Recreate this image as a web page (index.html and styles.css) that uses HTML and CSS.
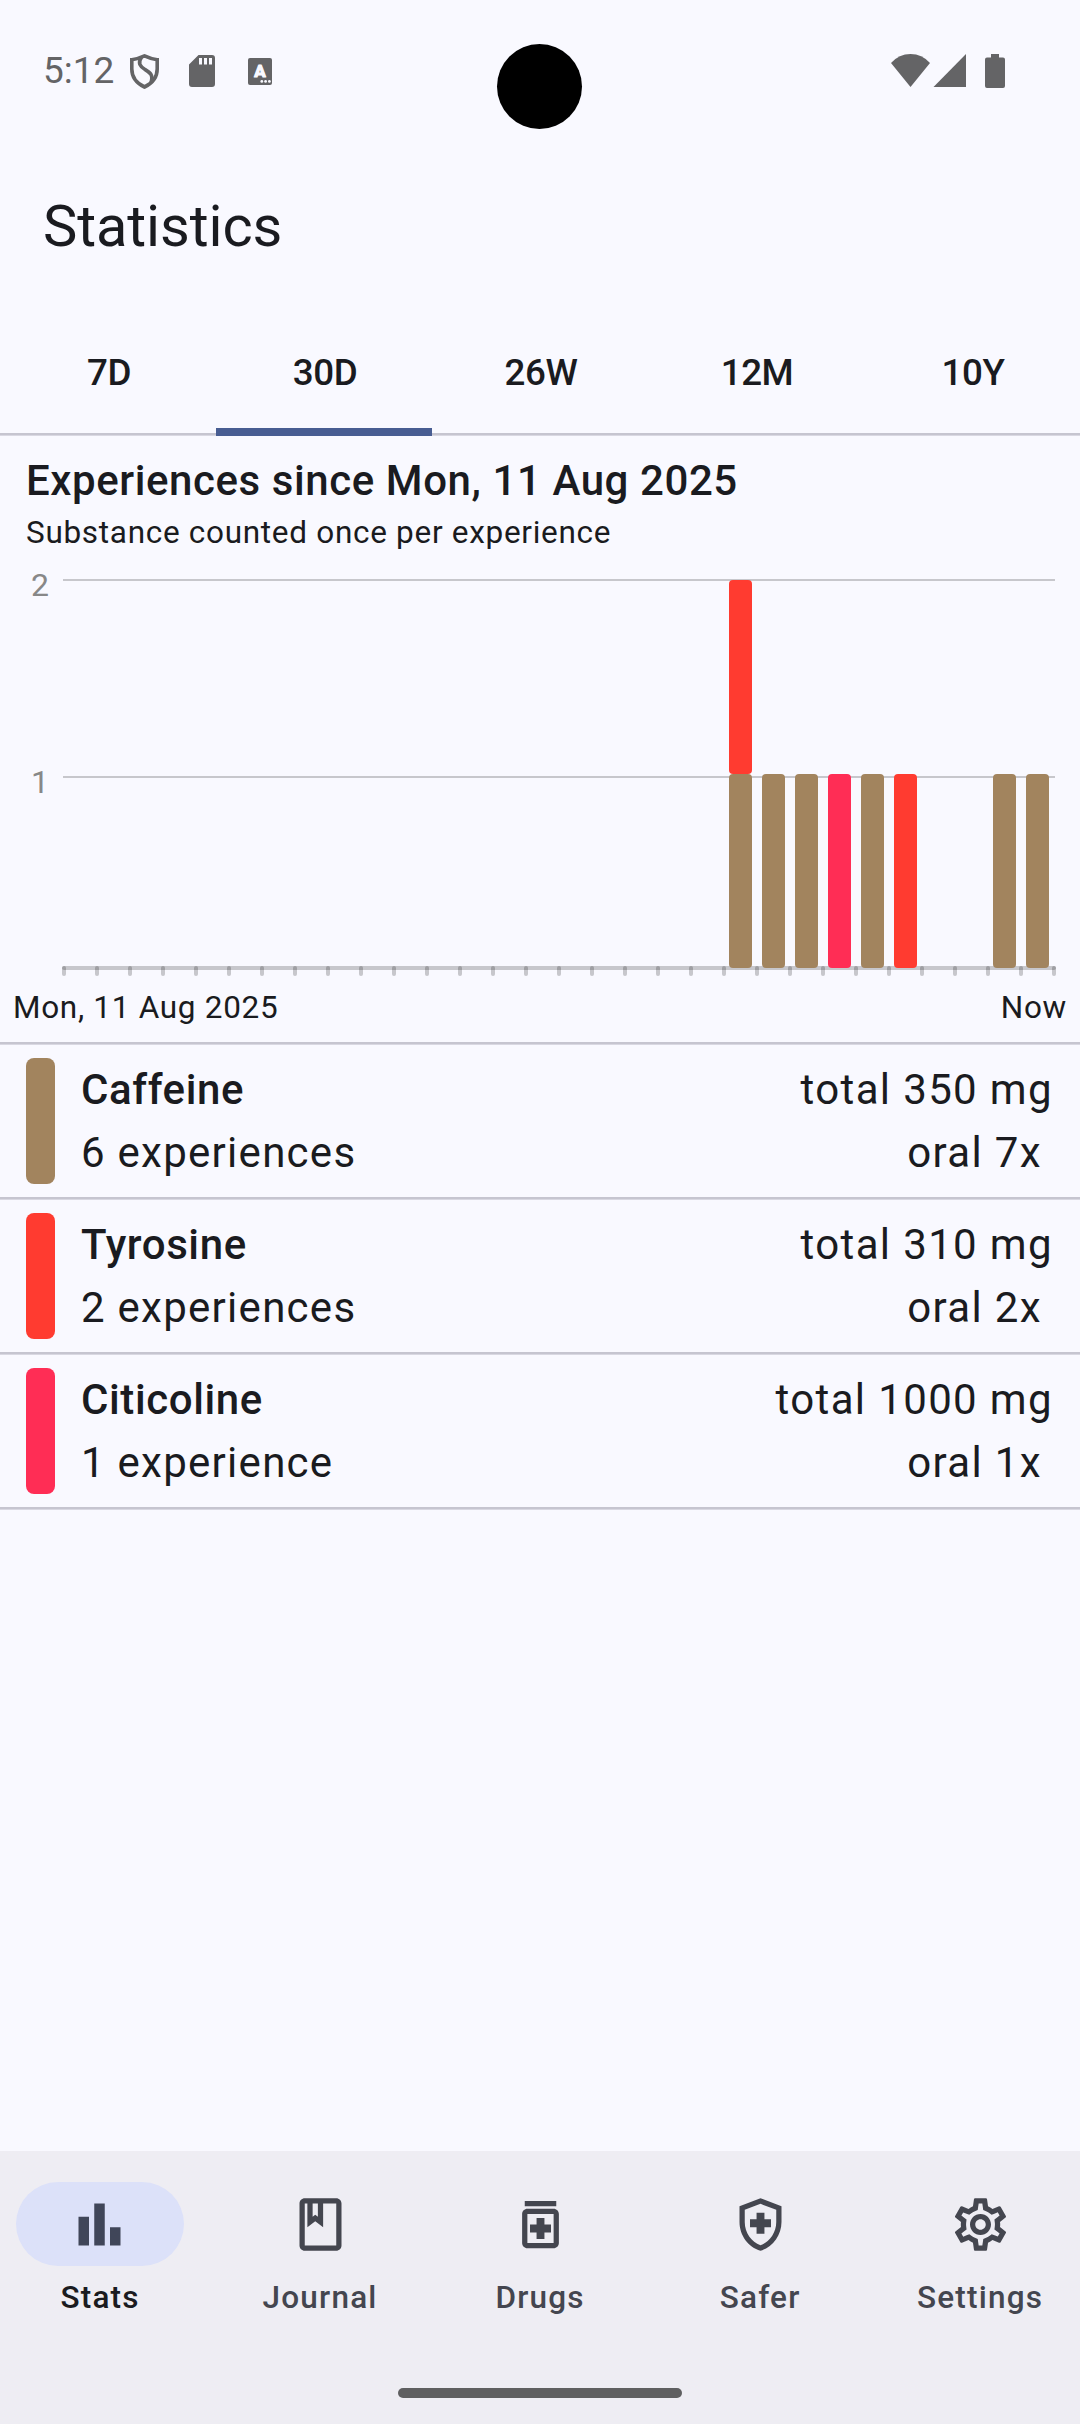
FILE: index.html
```html
<!DOCTYPE html>
<html lang="en">
<head>
<meta charset="utf-8">
<title>Statistics</title>
<link rel="stylesheet" href="styles.css">
</head>
<body>
<div class="screen">
  <header class="status-bar">
    <span class="clock">5:12</span>
    <svg class="status-shield" width="32" height="38" viewBox="0 0 32 38" fill="none" stroke="currentColor" stroke-width="3.6">
      <path d="M15.5 2.9Q22 6 28.2 6.700V16Q28.200 28 15.500 34Q2.800 28 2.800 16V6.700Q9 6 15.500 2.900Z"/>
      <path d="M12.500 4.200C8.500 10 11 13.500 16 16.500S24.500 21.500 22 29.500"/>
    </svg>
    <svg class="status-card" width="26" height="32" viewBox="0 0 26 32" fill="currentColor" fill-rule="evenodd">
      <path d="M9.500 0H23a3 3 0 0 1 3 3V29a3 3 0 0 1-3 3H3a3 3 0 0 1-3-3V9.500ZM10 3V9.500H13V3ZM15 3V9.500H18V3ZM20 3V9.500H23V3Z"/>
    </svg>
    <svg class="status-input" width="24" height="27" viewBox="0 0 24 27">
      <rect width="24" height="27" rx="2" fill="currentColor"/>
      <text class="input-letter" x="12" y="19" text-anchor="middle">A</text>
      <g fill="#f9f9ff"><circle cx="13.800" cy="23.400" r="1.400"/><circle cx="17.600" cy="23.400" r="1.400"/><circle cx="21.400" cy="23.400" r="1.400"/></g>
    </svg>
    <svg class="status-signals" width="116" height="36" viewBox="0 0 116 36" fill="currentColor">
      <path d="M0 9Q8 0 19.500 0T39 9L19.500 33Z"/>
      <path d="M75 0V33H42.500Z"/>
      <path d="M100 0h8v3.500h4q2 0 2 2V32q0 2-2 2H96q-2 0-2-2V5.500q0-2 2-2h4Z"/>
    </svg>
    <span class="camera"></span>
  </header>

  <h1 class="app-title">Statistics</h1>

  <nav class="tabs">
    <span class="tab">7D</span>
    <span class="tab tab-active">30D</span>
    <span class="tab">26W</span>
    <span class="tab">12M</span>
    <span class="tab">10Y</span>
  </nav>

  <main class="content">
    <section class="summary">
      <h2 class="heading">Experiences since Mon, 11 Aug 2025</h2>
      <p class="subheading">Substance counted once per experience</p>
    </section>

    <svg class="chart" width="1080" height="432" viewBox="0 0 1080 432">
      <defs>
        <pattern id="ticks" x="62" y="412" width="33" height="10" patternUnits="userSpaceOnUse">
          <rect width="4" height="10" rx="2" fill="#000" fill-opacity=".2"/>
        </pattern>
      </defs>
      <g class="grid-lines">
        <rect x="63" y="25" width="992" height="2"/>
        <rect x="63" y="222" width="992" height="2"/>
        <rect x="62" y="412" width="994" height="4" rx="2"/>
      </g>
      <rect x="62" y="412" width="994" height="10" fill="url(#ticks)"/>
      <g class="axis-text">
        <text x="31" y="42">2</text>
        <text x="31" y="239">1</text>
      </g>
      <g class="caffeine">
        <rect x="729" y="220" width="23" height="194" rx="4"/>
        <rect x="762" y="220" width="23" height="194" rx="4"/>
        <rect x="795" y="220" width="23" height="194" rx="4"/>
        <rect x="861" y="220" width="23" height="194" rx="4"/>
        <rect x="993" y="220" width="23" height="194" rx="4"/>
        <rect x="1026" y="220" width="23" height="194" rx="4"/>
      </g>
      <g class="tyrosine">
        <rect x="729" y="26" width="23" height="194" rx="4"/>
        <rect x="894" y="220" width="23" height="194" rx="4"/>
      </g>
      <g class="citicoline">
        <rect x="828" y="220" width="23" height="194" rx="4"/>
      </g>
    </svg>
    <div class="range"><span>Mon, 11 Aug 2025</span><span>Now</span></div>

    <section class="list">
      <article class="row">
        <span class="swatch swatch-caffeine"></span>
        <div class="row-main"><h3 class="name">Caffeine</h3><p>6 experiences</p></div>
        <div class="row-side"><p>total 350 mg</p><p class="route">oral 7x</p></div>
      </article>
      <article class="row">
        <span class="swatch swatch-tyrosine"></span>
        <div class="row-main"><h3 class="name">Tyrosine</h3><p>2 experiences</p></div>
        <div class="row-side"><p>total 310 mg</p><p class="route">oral 2x</p></div>
      </article>
      <article class="row">
        <span class="swatch swatch-citicoline"></span>
        <div class="row-main"><h3 class="name">Citicoline</h3><p>1 experience</p></div>
        <div class="row-side"><p>total 1000 mg</p><p class="route">oral 1x</p></div>
      </article>
    </section>
  </main>

  <footer class="bottom">
    <nav class="nav">
      <a class="nav-item nav-active">
        <span class="pill"><svg class="icon" viewBox="0 0 24 24"><path d="M4 9h4v11H4zM16 13h4v7h-4zM10 4h4v16h-4z"/></svg></span>
        <span>Stats</span>
      </a>
      <a class="nav-item">
        <span class="pill"><svg class="icon" viewBox="0 0 24 24"><path d="M18 2H6c-1.100 0-2 .9-2 2v16c0 1.100.9 2 2 2h12c1.100 0 2-.9 2-2V4c0-1.100-.9-2-2-2zM9 4h2v5l-1-.75L9 9V4zm9 16H6V4h1v9l3-2.250L13 13V4h5v16z"/></svg></span>
        <span>Journal</span>
      </a>
      <a class="nav-item">
        <span class="pill"><svg class="icon" viewBox="0 0 24 24"><path d="M6 3h12v2H6zM17 6H7c-1.100 0-2 .9-2 2v11c0 1.100.9 2 2 2h10c1.100 0 2-.9 2-2V8c0-1.100-.9-2-2-2zm0 13H7V8h10v11zM8 15h2.500v2.500h3V15H16v-3h-2.500V9.500h-3V12H8z"/></svg></span>
        <span>Drugs</span>
      </a>
      <a class="nav-item">
        <span class="pill"><svg class="icon" viewBox="0 0 24 24"><path d="M10.500 13H8v-3h2.500V7.500h3V10H16v3h-2.500v2.500h-3V13zM12 2L4 5v6.090c0 5.050 3.410 9.760 8 10.910 4.590-1.150 8-5.860 8-10.910V5l-8-3zm6 9.090c0 4-2.550 7.700-6 8.830-3.450-1.130-6-4.820-6-8.830v-4.700l6-2.250 6 2.250v4.700z"/></svg></span>
        <span>Safer</span>
      </a>
      <a class="nav-item">
        <span class="pill"><svg class="icon" viewBox="0 0 24 24"><path d="M19.43 12.98c.04-.32.07-.64.07-.98 0-.34-.03-.66-.07-.98l2.11-1.65c.19-.15.24-.42.12-.64l-2-3.46c-.09-.16-.26-.25-.44-.25-.06 0-.12.01-.17.03l-2.49 1c-.52-.4-1.08-.73-1.69-.98l-.38-2.65C14.46 2.18 14.25 2 14 2h-4c-.25 0-.46.18-.49.42l-.38 2.65c-.61.25-1.17.59-1.69.98l-2.49-1c-.06-.02-.12-.03-.18-.03-.17 0-.34.09-.43.25l-2 3.46c-.13.22-.07.49.12.64l2.11 1.65c-.04.32-.07.65-.07.98s.03.66.07.98l-2.11 1.65c-.19.15-.24.42-.12.64l2 3.46c.09.16.26.25.44.25.06 0 .12-.01.17-.03l2.49-1c.52.4 1.08.73 1.69.98l.38 2.65c.03.24.24.42.49.42h4c.25 0 .46-.18.49-.42l.38-2.65c.61-.25 1.17-.59 1.69-.98l2.49 1c.06.02.12.03.18.03.17 0 .34-.09.43-.25l2-3.46c.12-.22.07-.49-.12-.64l-2.11-1.65zm-1.98-1.71c.04.31.05.52.05.73 0 .21-.02.43-.05.73l-.14 1.13.89.7 1.08.84-.7 1.21-1.27-.51-1.04-.42-.9.68c-.43.32-.84.56-1.25.73l-1.06.43-.16 1.13-.2 1.35h-1.4l-.19-1.35-.16-1.13-1.06-.43c-.43-.18-.83-.41-1.23-.71l-.91-.7-1.06.43-1.27.51-.7-1.21 1.08-.84.89-.7-.14-1.13c-.03-.31-.05-.54-.05-.74s.02-.43.05-.73l.14-1.13-.89-.7-1.08-.84.7-1.21 1.27.51 1.04.42.9-.68c.43-.32.84-.56 1.25-.73l1.06-.43.16-1.13.2-1.35h1.39l.19 1.35.16 1.13 1.06.43c.43.18.83.41 1.23.71l.91.7 1.06-.43 1.27-.51.7 1.21-1.07.85-.89.7.14 1.13zM12 8c-2.210 0-4 1.790-4 4s1.790 4 4 4 4-1.790 4-4-1.790-4-4-4zm0 6c-1.100 0-2-.9-2-2s.9-2 2-2 2 .9 2 2-.9 2-2 2z"/></svg></span>
        <span>Settings</span>
      </a>
    </nav>
    <div class="gesture"></div>
  </footer>
</div>
</body>
</html>
```

FILE: styles.css
```css
* { box-sizing: border-box; }

body, h1, h2, h3, p { margin: 0; }

body {
  background: #f9f9ff;
  color: #1a1b20;
  font-family: Roboto, "Liberation Sans", sans-serif;
}

svg { display: block; flex: none; }

.screen {
  display: flex;
  flex-direction: column;
  width: 1080px;
  height: 2424px;
  overflow: hidden;
}

/* Status bar */
.status-bar {
  position: relative;
  display: flex;
  align-items: flex-start;
  height: 142px;
  padding: 53px 73px 0 43px;
  color: #646466;
}

.clock {
  width: 86px;
  margin-top: -4px;
  font-size: 37px;
  line-height: 43px;
}

.status-card { margin: 2px 0 0 28px; }
.status-input { margin: 4.500px 0 0 33px; }
.status-signals { margin: 1px 0 0 auto; }

.input-letter {
  fill: #f9f9ff;
  stroke: #f9f9ff;
  stroke-width: 1.2px;
  stroke-linejoin: round;
  font-size: 17px;
  font-weight: 700;
}

.camera {
  position: absolute;
  top: 44px;
  left: 497px;
  width: 85px;
  height: 85px;
  border-radius: 50%;
  background: #000;
}

.app-title {
  height: 168px;
  padding-left: 43px;
  font-size: 57.750px;
  font-weight: 400;
  line-height: 168px;
  letter-spacing: -0.1px;
}

/* Period tabs */
.tabs {
  display: grid;
  grid-template-columns: repeat(5, 1fr);
  height: 126px;
  background: linear-gradient(#c6c5d0 2px, #d9d8e2 2px) bottom / 100% 3px no-repeat;
}

.tab {
  padding-left: 2px;
  font-size: 36.750px;
  font-weight: 500;
  line-height: 126px;
  letter-spacing: -0.4px;
  text-align: center;
}

.tab-active { box-shadow: inset 0 -8px #485d92; }

.content { flex: 1; }

.summary { padding: 13px 26px 0; }

.heading {
  height: 63px;
  font-size: 42px;
  font-weight: 500;
  line-height: 63px;
  letter-spacing: 0.58px;
}

.subheading {
  height: 42px;
  font-size: 31.500px;
  line-height: 42px;
  letter-spacing: 0.7px;
}

/* Chart */
.grid-lines { fill: #000; fill-opacity: 0.2; }
.axis-text { fill: #888; font-size: 32px; }
.caffeine { fill: #a2845e; }
.tyrosine { fill: #ff3b30; }
.citicoline { fill: #ff2d55; }

.range {
  display: flex;
  justify-content: space-between;
  height: 56px;
  padding: 1px 13px 0;
  font-size: 31.500px;
  line-height: 42px;
  letter-spacing: 0.7px;
}

/* Substance list */
.list {
  padding-top: 3px;
  background: linear-gradient(#c6c5d0 2px, #d9d8e2 2px) top / 100% 3px no-repeat;
}

.row {
  display: flex;
  gap: 26px;
  height: 155px;
  padding: 13px 27px 16px 26px;
  font-size: 42px;
  line-height: 63px;
  letter-spacing: 1.270px;
  background: linear-gradient(#c6c5d0 2px, #d9d8e2 2px) bottom / 100% 3px no-repeat;
}

.swatch { width: 29px; border-radius: 8px; }
.swatch-caffeine { background: #a2845e; }
.swatch-tyrosine { background: #ff3b30; }
.swatch-citicoline { background: #ff2d55; }

.row-main { flex: 1; }
.row-side { text-align: right; letter-spacing: 1.360px; }
.route { padding-right: 11px; }

.name {
  font-size: 42px;
  font-weight: 500;
  letter-spacing: 0.6px;
}

/* Bottom navigation */
.bottom {
  height: 273px;
  background: #eeedf3;
}

.nav {
  display: grid;
  grid-template-columns: repeat(5, 199px);
  gap: 21px;
  height: 237px;
  padding: 31px 0 0 0.6px;
}

.nav-item {
  display: flex;
  flex-direction: column;
  align-items: center;
  gap: 11px;
  color: #44464f;
  font-size: 31.500px;
  font-weight: 500;
  line-height: 42px;
  letter-spacing: 1.200px;
}

.nav-active { color: #1a1b20; }

.pill {
  display: flex;
  align-items: center;
  justify-content: center;
  width: 168px;
  height: 84px;
  border-radius: 42px;
}

.nav-active .pill {
  padding-right: 1px;
  background: #dce1f9;
  color: #404659;
}

.icon {
  width: 63px;
  height: 63px;
  fill: currentColor;
}

.gesture {
  width: 284px;
  height: 10px;
  margin: 0 auto;
  border-radius: 5px;
  background: #5f5f60;
}
```
